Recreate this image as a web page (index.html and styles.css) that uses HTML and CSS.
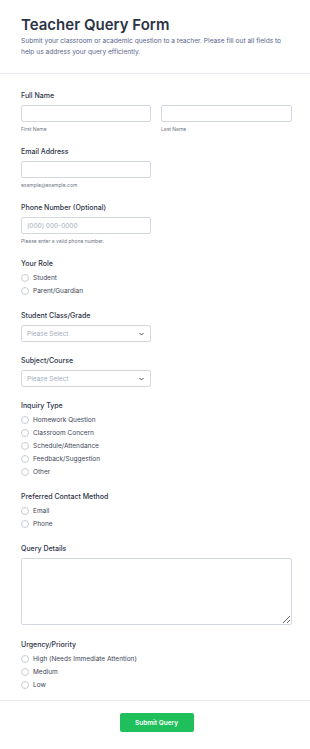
FILE: index.html
```html
<!DOCTYPE html>
<html lang="en">
<head>
    <meta charset="UTF-8">
    <meta name="viewport" content="width=device-width, initial-scale=1.0">
    <title>Teacher Query Form</title>
    <link rel="stylesheet" href="styles.css">
</head>
<body>
    <form class="form">
        <div class="header">
            <h1>Teacher Query Form</h1>
            <p>Submit your classroom or academic question to a teacher. Please fill out all fields to help us address your query efficiently.</p>
        </div>

        <div class="body">
            <div class="field">
                <label class="label">Full Name</label>
                <div class="name-row">
                    <div>
                        <input type="text" class="input wide">
                        <div class="sub">First Name</div>
                    </div>
                    <div>
                        <input type="text" class="input wide">
                        <div class="sub">Last Name</div>
                    </div>
                </div>
            </div>

            <div class="field">
                <label class="label">Email Address</label>
                <input type="email" class="input">
                <div class="sub">example@example.com</div>
            </div>

            <div class="field">
                <label class="label">Phone Number (Optional)</label>
                <input type="tel" class="input" placeholder="(000) 000-0000">
                <div class="sub">Please enter a valid phone number.</div>
            </div>

            <div class="field">
                <label class="label radio-label">Your Role</label>
                <label class="option"><input type="radio" name="role"><span>Student</span></label>
                <label class="option"><input type="radio" name="role"><span>Parent/Guardian</span></label>
            </div>

            <div class="field">
                <label class="label">Student Class/Grade</label>
                <div class="select">
                    <span>Please Select</span>
                    <svg width="5" height="4" viewBox="0 0 10 6"><path d="M1 1l4 4 4-4" fill="none" stroke="#4a5568" stroke-width="2"/></svg>
                </div>
            </div>

            <div class="field">
                <label class="label">Subject/Course</label>
                <div class="select">
                    <span>Please Select</span>
                    <svg width="5" height="4" viewBox="0 0 10 6"><path d="M1 1l4 4 4-4" fill="none" stroke="#4a5568" stroke-width="2"/></svg>
                </div>
            </div>

            <div class="field">
                <label class="label radio-label">Inquiry Type</label>
                <label class="option"><input type="radio" name="type"><span>Homework Question</span></label>
                <label class="option"><input type="radio" name="type"><span>Classroom Concern</span></label>
                <label class="option"><input type="radio" name="type"><span>Schedule/Attendance</span></label>
                <label class="option"><input type="radio" name="type"><span>Feedback/Suggestion</span></label>
                <label class="option"><input type="radio" name="type"><span>Other</span></label>
            </div>

            <div class="field">
                <label class="label radio-label">Preferred Contact Method</label>
                <label class="option"><input type="radio" name="contact"><span>Email</span></label>
                <label class="option"><input type="radio" name="contact"><span>Phone</span></label>
            </div>

            <div class="field details">
                <label class="label">Query Details</label>
                <textarea class="textarea"></textarea>
            </div>

            <div class="field">
                <label class="label radio-label">Urgency/Priority</label>
                <label class="option"><input type="radio" name="urgency"><span>High (Needs Immediate Attention)</span></label>
                <label class="option"><input type="radio" name="urgency"><span>Medium</span></label>
                <label class="option"><input type="radio" name="urgency"><span>Low</span></label>
            </div>
        </div>

        <div class="footer">
            <button type="button" class="submit">Submit Query</button>
        </div>
    </form>
</body>
</html>
```

FILE: styles.css
```css
body {
    margin: 0;
    font-family: Inter, "Noto Sans", sans-serif;
    background-color: #ffffff;
    color: #2c3345;
}
.header {
    padding: 16px 18px 16px 21px;
    border-bottom: 1px solid #e6e8ee;
}
.header h1 {
    margin: 0;
    font-size: 15px;
    line-height: 18px;
    font-weight: 600;
    color: #2c3345;
}
.header p {
    margin: 2px 0 0;
    font-size: 6.6px;
    line-height: 10.5px;
    color: #57648a;
}
.body {
    padding: 17px 18px 9px 21px;
    border-bottom: 1px solid #e6e8ee;
}
.field {
    margin-bottom: 14px;
}
.field.details {
    margin-bottom: 15px;
}
.field:last-child {
    margin-bottom: 0;
}
.label {
    display: block;
    font-size: 7px;
    line-height: 10px;
    font-weight: 500;
    margin-bottom: 4px;
}
.radio-label {
    margin-bottom: 2px;
}
.name-row {
    display: grid;
    grid-template-columns: 130px 131px;
    gap: 10px;
}
.input {
    display: block;
    box-sizing: border-box;
    width: 130px;
    height: 17px;
    margin: 0;
    padding: 0 5px;
    border: 1px solid #d3d7e0;
    border-radius: 2px;
    font-family: inherit;
    font-size: 6.5px;
    color: #2c3345;
    outline: none;
}
.input.wide {
    width: 100%;
}
.input::placeholder {
    color: #a4abbb;
}
.sub {
    margin-top: 3px;
    font-size: 5px;
    line-height: 8px;
    color: #6f7686;
}
.option {
    display: flex;
    align-items: center;
    height: 13px;
    font-size: 6.5px;
    color: #3e4657;
}
.option input {
    appearance: none;
    box-sizing: border-box;
    width: 8px;
    height: 8px;
    margin: 0 4px 0 0;
    border: 1px solid #c7ccd6;
    border-radius: 50%;
    background: #ffffff;
}
.select {
    display: flex;
    justify-content: space-between;
    align-items: center;
    box-sizing: border-box;
    width: 130px;
    height: 17px;
    padding: 0 6px 0 5px;
    border: 1px solid #d3d7e0;
    border-radius: 2px;
    font-size: 6.5px;
    color: #a4abbb;
}
.textarea {
    display: block;
    box-sizing: border-box;
    width: 100%;
    height: 67px;
    margin: 0;
    border: 1px solid #d3d7e0;
    border-radius: 2px;
    font-family: inherit;
    outline: none;
}
.footer {
    display: flex;
    justify-content: center;
    padding: 12px 18px 20px 21px;
}
.submit {
    width: 74px;
    height: 19px;
    border: none;
    border-radius: 2px;
    background-color: #1fbf5c;
    color: #ffffff;
    font-family: inherit;
    font-size: 6.5px;
    font-weight: 600;
    cursor: pointer;
}
```
